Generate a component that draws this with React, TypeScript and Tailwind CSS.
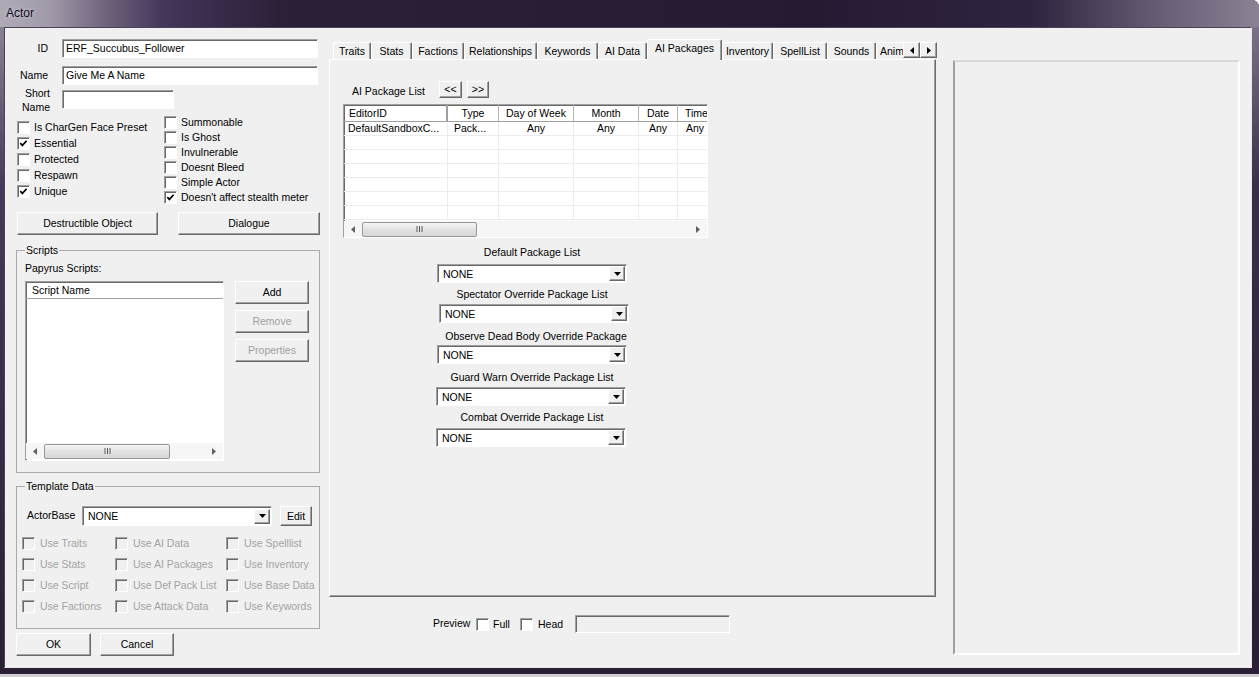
import type { ReactNode } from 'react'

// classic 3D edges
const raised =
  'border border-t-white border-l-white border-r-[#696969] border-b-[#696969] shadow-[inset_-1px_-1px_0_#a0a0a0]'
const sunken =
  'border border-t-[#a0a0a0] border-l-[#a0a0a0] border-r-white border-b-white shadow-[inset_1px_1px_0_#696969]'

function Button({
  children,
  className = '',
  disabled = false,
}: {
  children: ReactNode
  className?: string
  disabled?: boolean
}) {
  return (
    <div
      className={`flex shrink-0 items-center justify-center bg-[#f0f0f0] ${raised} ${
        disabled ? 'text-[#a0a0a0]' : 'text-black'
      } ${className}`}
    >
      {children}
    </div>
  )
}

function Check({ checked = false, disabled = false }: { checked?: boolean; disabled?: boolean }) {
  return (
    <span
      className={`flex h-[13px] w-[13px] shrink-0 items-center justify-center ${sunken} ${
        disabled ? 'bg-[#f0f0f0]' : 'bg-white'
      }`}
    >
      {checked && (
        <svg width="9" height="9" viewBox="0 0 9 9">
          <path d="M1.3 4.2 L3.4 6.4 L7.6 1.8" fill="none" stroke="#000" strokeWidth="1.7" />
        </svg>
      )}
    </span>
  )
}

function CheckRow({
  label,
  checked = false,
  disabled = false,
  className = '',
}: {
  label: string
  checked?: boolean
  disabled?: boolean
  className?: string
}) {
  return (
    <div className={`flex items-center ${className}`}>
      <Check checked={checked} disabled={disabled} />
      <span
        className={`whitespace-nowrap ${disabled ? 'ml-[5px] text-[#a3a3a3]' : 'ml-[4px]'}`}
      >
        {label}
      </span>
    </div>
  )
}

function DropArrow() {
  return (
    <svg width="7" height="4" viewBox="0 0 7 4">
      <path d="M0 0 H7 L3.5 4 Z" fill="#000" />
    </svg>
  )
}

function Combo({ className = '' }: { className?: string }) {
  return (
    <div className={`flex items-center bg-white ${sunken} ${className}`}>
      <span className="flex-1 pl-[5px] pt-[1px]">NONE</span>
      <div className={`mr-[1px] flex h-[15px] w-[16px] items-center justify-center bg-[#f0f0f0] ${raised}`}>
        <DropArrow />
      </div>
    </div>
  )
}

function HScroll({ thumb }: { thumb: string }) {
  return (
    <div className="flex h-[16px] shrink-0 items-center bg-[#f6f6f6]">
      <div className="flex w-[18px] justify-center">
        <svg width="4" height="7" viewBox="0 0 4 7">
          <path d="M4 0 L0 3.5 L4 7 Z" fill="#606060" />
        </svg>
      </div>
      <div
        className={`flex h-[15px] items-center justify-center rounded-[2px] border border-[#979797] bg-[linear-gradient(180deg,#f5f5f5,#e2e2e2_50%,#d6d6d6)] ${thumb}`}
      >
        <svg width="7" height="6" viewBox="0 0 7 6">
          <path d="M1 0 V6 M3.5 0 V6 M6 0 V6" stroke="#5c5c5c" strokeWidth="1" />
        </svg>
      </div>
      <div className="flex-1" />
      <div className="flex w-[18px] justify-center">
        <svg width="4" height="7" viewBox="0 0 4 7">
          <path d="M0 0 L4 3.5 L0 7 Z" fill="#606060" />
        </svg>
      </div>
    </div>
  )
}

const flagsLeft = [
  { label: 'Is CharGen Face Preset' },
  { label: 'Essential', checked: true },
  { label: 'Protected' },
  { label: 'Respawn' },
  { label: 'Unique', checked: true },
]

const flagsRight = [
  { label: 'Summonable' },
  { label: 'Is Ghost' },
  { label: 'Invulnerable' },
  { label: 'Doesnt Bleed' },
  { label: 'Simple Actor' },
  { label: "Doesn't affect stealth meter", checked: true },
]

const templateFlags = [
  ['Use Traits', 'Use Stats', 'Use Script', 'Use Factions'],
  ['Use AI Data', 'Use AI Packages', 'Use Def Pack List', 'Use Attack Data'],
  ['Use Spelllist', 'Use Inventory', 'Use Base Data', 'Use Keywords'],
]
const templateColWidths = ['w-[93px]', 'w-[111px]', 'w-[90px]']

const tabs = [
  { label: 'Traits', w: 'w-[38px]' },
  { label: 'Stats', w: 'w-[41px]' },
  { label: 'Factions', w: 'w-[52px]' },
  { label: 'Relationships', w: 'w-[73px]' },
  { label: 'Keywords', w: 'w-[61px]' },
  { label: 'AI Data', w: 'w-[49px]' },
  { label: 'AI Packages', w: 'w-[75px]', active: true },
  { label: 'Inventory', w: 'w-[51px]' },
  { label: 'SpellList', w: 'w-[54px]' },
  { label: 'Sounds', w: 'w-[49px]' },
]

const columns = [
  { name: 'EditorID', w: 'w-[104px]', head: 'justify-start pl-[5px]', cell: 'justify-start pl-[4px]', value: 'DefaultSandboxC...' },
  { name: 'Type', w: 'w-[51px]', head: 'justify-center', cell: 'justify-start pl-[6px]', value: 'Pack...' },
  { name: 'Day of Week', w: 'w-[75px]', head: 'justify-center', cell: 'justify-center', value: 'Any' },
  { name: 'Month', w: 'w-[65px]', head: 'justify-center', cell: 'justify-center', value: 'Any' },
  { name: 'Date', w: 'w-[39px]', head: 'justify-center', cell: 'justify-center', value: 'Any' },
  { name: 'Time', w: 'w-[60px]', head: 'justify-start pl-[7px]', cell: 'justify-start pl-[8px]', value: 'Any' },
]

const packageLists = [
  { label: 'Default Package List', labelCls: 'mt-[7px]', comboCls: 'mt-[5px] ml-[1px]' },
  { label: 'Spectator Override Package List', labelCls: 'mt-[4px]', comboCls: 'mt-[3px] ml-[3px]' },
  { label: 'Observe Dead Body Override Package', labelCls: 'mt-[6px] pl-[8px]', comboCls: 'mt-[2px] ml-[1px]' },
  { label: 'Guard Warn Override Package List', labelCls: 'mt-[6px]', comboCls: 'mt-[3px]' },
  { label: 'Combat Override Package List', labelCls: 'mt-[4px]', comboCls: 'mt-[4px]' },
]

function GroupBox({ title, className, children }: { title: string; className: string; children: ReactNode }) {
  return (
    <fieldset className={`ml-[4px] w-[304px] border border-[#a9a9a9] ${className}`}>
      <legend className="ml-[8px] px-[1px] leading-[14px]">{title}</legend>
      {children}
    </fieldset>
  )
}

function LeftColumn() {
  return (
    <div className="mt-[11px] flex w-[308px] shrink-0 flex-col">
      <div className="flex items-center">
        <span className="w-[36px] text-right">ID</span>
        <div className={`ml-[14px] flex h-[19px] w-[256px] items-center bg-white pl-[3px] ${sunken}`}>
          ERF_Succubus_Follower
        </div>
      </div>
      <div className="mt-[8px] flex items-center">
        <span className="w-[36px] text-right">Name</span>
        <div className={`ml-[14px] flex h-[19px] w-[256px] items-center bg-white pl-[3px] ${sunken}`}>
          Give Me A Name
        </div>
      </div>
      <div className="mt-[1px] flex items-start">
        <span className="w-[38px] text-right leading-[14px]">
          Short
          <br />
          Name
        </span>
        <div className={`ml-[12px] mt-[4px] h-[19px] w-[112px] bg-white ${sunken}`} />
      </div>

      <div className="mt-[1px] flex">
        <div className="ml-[5px] w-[147px] pt-[4px]">
          {flagsLeft.map((f) => (
            <CheckRow key={f.label} label={f.label} checked={f.checked} className="h-[16px]" />
          ))}
        </div>
        <div>
          {flagsRight.map((f) => (
            <CheckRow key={f.label} label={f.label} checked={f.checked} className="h-[15px]" />
          ))}
        </div>
      </div>

      <div className="mt-[7px] flex">
        <Button className="ml-[5px] h-[23px] w-[141px]">Destructible Object</Button>
        <Button className="ml-[20px] h-[23px] w-[142px]">Dialogue</Button>
      </div>

      <GroupBox title="Scripts" className="mt-[8px] h-[230px]">
        <div className="pl-[8px]">
          <div className="mt-[5px] leading-[13px]">Papyrus Scripts:</div>
          <div className="mt-[6px] flex items-start">
            <div className={`flex h-[180px] w-[199px] flex-col bg-white ${sunken}`}>
              <div className="flex h-[17px] shrink-0 items-center border-b border-[#a0a0a0] pl-[6px] pt-[1px]">
                Script Name
              </div>
              <div className="flex-1" />
              <HScroll thumb="w-[126px]" />
              <div className="h-[1px] shrink-0" />
            </div>
            <div className="ml-[11px] flex flex-col gap-[6px]">
              <Button className="h-[23px] w-[74px]">Add</Button>
              <Button className="h-[23px] w-[74px]" disabled>
                Remove
              </Button>
              <Button className="h-[23px] w-[74px]" disabled>
                Properties
              </Button>
            </div>
          </div>
        </div>
      </GroupBox>

      <GroupBox title="Template Data" className="mt-[6px] h-[150px]">
        <div className="mt-[13px] flex items-center pl-[10px]">
          <span className="w-[55px] pb-[2px]">ActorBase</span>
          <Combo className="h-[20px] w-[190px]" />
          <Button className="ml-[8px] h-[20px] w-[32px]">Edit</Button>
        </div>
        <div className="ml-[5px] mt-[7px] flex">
          {templateFlags.map((col, i) => (
            <div key={i} className={templateColWidths[i]}>
              {col.map((label) => (
                <CheckRow key={label} label={label} disabled className="h-[21px]" />
              ))}
            </div>
          ))}
        </div>
      </GroupBox>

      <div className="mt-[4px] flex">
        <Button className="ml-[4px] h-[23px] w-[75px] border-r-[#404040] border-b-[#404040]">OK</Button>
        <Button className="ml-[9px] h-[23px] w-[74px]">Cancel</Button>
      </div>
    </div>
  )
}

function TabStrip() {
  return (
    <div className="flex h-[20px] w-[608px] items-end pl-[4px]">
      {tabs.map((t) =>
        t.active ? (
          <div
            key={t.label}
            className={`relative z-10 -mb-px flex h-[21px] shrink-0 items-center justify-center rounded-t-[2px] border-l border-r border-t border-l-white border-r-[#696969] border-t-white bg-[#f0f0f0] pb-[3px] shadow-[inset_-1px_0_0_#a0a0a0] ${t.w}`}
          >
            {t.label}
          </div>
        ) : (
          <div
            key={t.label}
            className={`flex h-[17px] shrink-0 items-center justify-center rounded-t-[2px] border-l border-r border-t border-l-white border-r-[#696969] border-t-white shadow-[inset_-1px_0_0_#a0a0a0] ${t.w}`}
          >
            {t.label}
          </div>
        ),
      )}
      {/* the last tab runs under the scroll arrows */}
      <div className="flex h-[17px] w-[27px] shrink-0 items-center overflow-hidden border-l border-t border-l-white border-t-white pl-[3px]">
        Anim
      </div>
      <Button className="mb-[1px] h-[16px] w-[17px]">
        <svg width="4" height="7" viewBox="0 0 4 7">
          <path d="M4 0 L0 3.5 L4 7 Z" fill="#000" />
        </svg>
      </Button>
      <Button className="mb-[1px] h-[16px] w-[17px]">
        <svg width="4" height="7" viewBox="0 0 4 7">
          <path d="M0 0 L4 3.5 L0 7 Z" fill="#000" />
        </svg>
      </Button>
    </div>
  )
}

function PackageTable() {
  return (
    <div className={`ml-[13px] mt-[6px] flex h-[134px] w-[365px] flex-col overflow-hidden bg-white ${sunken}`}>
      <div className="flex h-[17px] shrink-0 border-b border-[#a0a0a0]">
        {columns.map((c, i) => (
          <div
            key={c.name}
            className={`flex shrink-0 items-center whitespace-nowrap pt-[1px] ${c.w} ${c.head} ${
              i === 0 ? 'border-r-2 border-double border-[#a0a0a0]' : 'border-r border-[#b5b5b5]'
            }`}
          >
            {c.name}
          </div>
        ))}
      </div>
      <div className="flex-1 overflow-hidden">
        {Array.from({ length: 7 }).map((_, r) => (
          <div key={r} className="flex h-[14px] border-b border-[#ececec]">
            {columns.map((c) => (
              <div
                key={c.name}
                className={`flex shrink-0 items-center whitespace-nowrap border-r border-[#ececec] ${c.w} ${c.cell}`}
              >
                {r === 0 ? c.value : ''}
              </div>
            ))}
          </div>
        ))}
      </div>
      <HScroll thumb="w-[115px]" />
    </div>
  )
}

function MiddleColumn() {
  return (
    <div className="ml-[9px] mt-[11px] flex shrink-0 flex-col">
      <TabStrip />
      <div className={`h-[538px] w-[607px] bg-[#f0f0f0] ${raised}`}>
        <div className="ml-[22px] mt-[21px] flex h-[17px] items-center">
          <span className="w-[87px] pt-[3px]">AI Package List</span>
          <Button className="h-[17px] w-[23px]">&lt;&lt;</Button>
          <Button className="ml-[5px] h-[17px] w-[22px]">&gt;&gt;</Button>
        </div>
        <PackageTable />
        <div className="ml-[106px] flex w-[192px] flex-col">
          {packageLists.map((p) => (
            <div key={p.label} className="flex flex-col">
              <div className={`h-[14px] whitespace-nowrap text-center leading-[14px] ${p.labelCls}`}>{p.label}</div>
              <Combo className={`h-[19px] w-[190px] ${p.comboCls}`} />
            </div>
          ))}
        </div>
      </div>
      <div className="ml-[104px] mt-[18px] flex h-[18px] items-center">
        <span className="w-[40px] pb-[2px]">Preview</span>
        <span className="ml-[3px]">
          <Check />
        </span>
        <span className="ml-[4px] w-[18px]">Full</span>
        <span className="ml-[9px]">
          <Check />
        </span>
        <span className="ml-[5px] w-[26px]">Head</span>
        <div className={`ml-[11px] h-[18px] w-[155px] bg-[#f0f0f0] ${sunken}`} />
      </div>
    </div>
  )
}

export default function App() {
  return (
    <div className="flex h-[677px] w-[1259px] flex-col overflow-hidden rounded-tr-[7px] bg-[#2b2036] font-['Liberation_Sans',Arial,sans-serif] text-[10.5px] leading-[13px] text-black">
      <div className="flex h-[27px] shrink-0 items-center bg-[linear-gradient(90deg,#b0aab6_0%,#a19aa9_4%,#73677f_8%,#43365a_13%,#2c2039_22%,#261a33_65%,#2f2440_82%,#6c6278_93%,#8b8195_100%)] pl-[6px]">
        <span className="pb-[1px] text-[12px] text-[#0c0c24] [text-shadow:0_0_4px_rgba(255,255,255,0.6)]">
          Actor
        </span>
      </div>
      <div className="flex h-[641px] shrink-0">
        <div className="w-[4px] shrink-0 bg-[linear-gradient(180deg,#8a8094,#45385a_25%,#2a1f35)]" />
        <div className="flex h-[641px] w-[1248px] shrink-0 items-start border border-b-[#e8e8e8] border-l-[#4b4158] border-r-[#e8e8e8] border-t-[#4b4158] bg-[#f0f0f0] pl-[7px]">
          <LeftColumn />
          <MiddleColumn />
          <div className="ml-[16px] mt-[32px] h-[595px] w-[287px] shrink-0 border-2 border-b-white border-l-[#a0a0a0] border-r-white border-t-[#d8d8d8]" />
        </div>
        <div className="w-[7px] shrink-0 bg-[linear-gradient(180deg,#7c7287,#3a2e48_25%,#2a1f35)]" />
      </div>
      <div className="h-[6px] shrink-0 bg-[#2a1f35]" />
      <div className="h-[3px] shrink-0 bg-[#cfcfcf]" />
    </div>
  )
}
